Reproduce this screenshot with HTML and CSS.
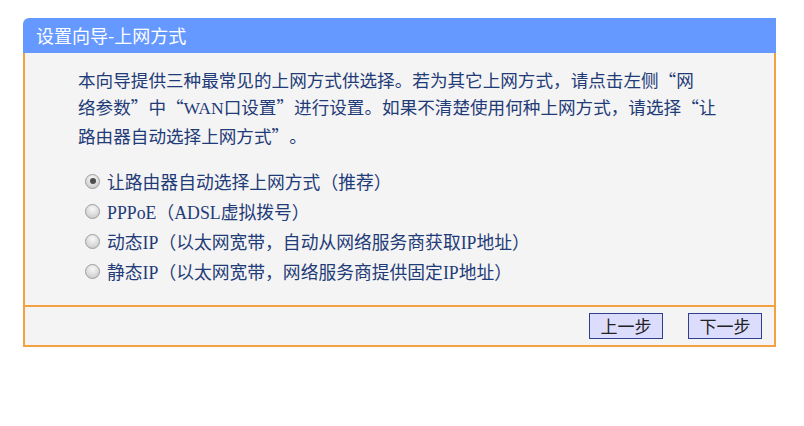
FILE: index.html
```html
<!DOCTYPE html>
<html lang="zh-CN">
<head>
<meta charset="utf-8">
<title>设置向导-上网方式</title>
<link rel="stylesheet" href="styles.css">
</head>
<body>
<div class="panel">
  <div class="panel-head">设置向导-上网方式</div>
  <div class="panel-body">
    <p class="intro">本向导提供三种最常见的上网方式供选择。若为其它上网方式，请点击左侧<span class="q-open">“</span>网<br>络参数<span class="q-close">”</span>中<span class="q-open">“</span><span class="lat">WAN</span>口设置<span class="q-close">”</span>进行设置。如果不清楚使用何种上网方式，请选择<span class="q-open">“</span>让<br>路由器自动选择上网方式<span class="q-close">”</span>。</p>
    <ul class="options">
      <li class="option"><span class="radio checked"></span><span>让路由器自动选择上网方式（推荐）</span></li>
      <li class="option"><span class="radio"></span><span><span class="lat">PPPoE</span>（<span class="lat">ADSL</span>虚拟拨号）</span></li>
      <li class="option"><span class="radio"></span><span>动态<span class="lat">IP</span>（以太网宽带，自动从网络服务商获取<span class="lat">IP</span>地址）</span></li>
      <li class="option"><span class="radio"></span><span>静态<span class="lat">IP</span>（以太网宽带，网络服务商提供固定<span class="lat">IP</span>地址）</span></li>
    </ul>
  </div>
  <div class="panel-foot">
    <button class="btn" type="button">上一步</button>
    <button class="btn" type="button">下一步</button>
  </div>
</div>
</body>
</html>
```

FILE: styles.css
```css
html, body {
  margin: 0;
  padding: 0;
  background: #ffffff;
}
body {
  font-family: "Noto Sans CJK SC", "Liberation Sans", sans-serif;
  padding-top: 18px;
}
.panel {
  margin-left: 23px;
  width: 753px;
}
.panel-head {
  height: 35px;
  line-height: 35px;
  background: #6699ff;
  color: #ffffff;
  font-size: 18px;
  padding-left: 13px;
  border-top-left-radius: 6px;
}
.panel-body {
  background: #f4f4f4;
  border-left: 2px solid #f4a142;
  border-right: 2px solid #f4a142;
  border-bottom: 2px solid #f4a142;
  padding: 13px 0 19px 0;
}
.intro {
  margin: 0 0 17px 53px;
  font-size: 17.6px;
  line-height: 27px;
  color: #1f3b78;
  white-space: nowrap;
}
.q-open,
.q-close {
  display: inline-block;
  width: 1em;
}
.q-open {
  text-align: right;
}
.q-close {
  text-align: left;
}
.lat {
  font-family: "Liberation Serif", serif;
}
.options {
  list-style: none;
  margin: 0;
  padding: 0 0 0 60px;
}
.option {
  display: flex;
  align-items: center;
  gap: 7px;
  height: 30px;
  font-size: 17.8px;
  color: #1f3b78;
  white-space: nowrap;
}
.radio {
  width: 13px;
  height: 13px;
  border-radius: 50%;
  border: 1px solid #9c9c9c;
  background: radial-gradient(circle at 50% 30%, #f8f8f8 0%, #dcdcdc 55%, #c2c2c2 100%);
  box-sizing: content-box;
  position: relative;
  flex: none;
}
.radio.checked::after {
  content: "";
  position: absolute;
  left: 3.5px;
  top: 3.5px;
  width: 6px;
  height: 6px;
  border-radius: 50%;
  background: #4d4d4d;
}
.panel-foot {
  background: #f4f4f4;
  border-left: 2px solid #f4a142;
  border-right: 2px solid #f4a142;
  border-bottom: 2px solid #f4a142;
  height: 38px;
  display: flex;
  align-items: center;
  justify-content: flex-end;
  gap: 25px;
  padding-right: 12px;
}
.btn {
  width: 74px;
  height: 26px;
  margin: 0;
  padding: 0;
  border: 1px solid #2f3f8f;
  background: #dcdcfc;
  color: #222222;
  font-family: "Noto Sans CJK SC", sans-serif;
  font-size: 17px;
  line-height: 24px;
}
```
